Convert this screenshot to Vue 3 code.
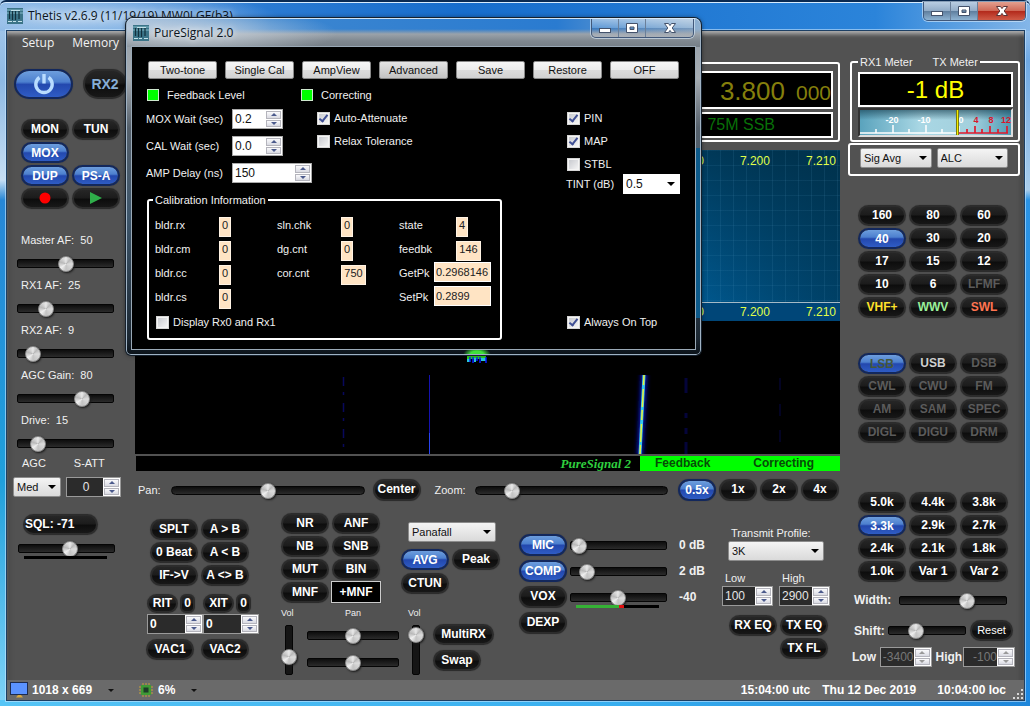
<script setup>
import { h, ref } from 'vue'

const Spin = (props) =>
  h('span', { class: 'spin' }, [
    h('input', { type: 'text', value: props.value, 'aria-label': props.label }),
    h('span', { class: 'spin-arrows' }, [
      h('button', { type: 'button', class: 'up', 'aria-label': props.label + ' up' }),
      h('button', { type: 'button', class: 'down', 'aria-label': props.label + ' down' }),
    ]),
  ])
Spin.props = ['label', 'value']

const Range = (props) =>
  h('input', { type: 'range', class: 'range', min: 0, max: 100, value: props.value, 'aria-label': props.label })
Range.props = ['label', 'value']

const Drop = (props) =>
  h('span', { class: 'drop' }, [
    h('select', { 'aria-label': props.label }, [h('option', props.value)]),
  ])
Drop.props = ['label', 'value']

const AppIcon = () =>
  h('svg', { class: 'app-icon', viewBox: '0 0 16 16', width: 16, height: 16, 'aria-hidden': 'true' }, [
    h('rect', { width: 16, height: 16, fill: '#3b7488' }),
    h('path', { d: 'M0 2h16M0 5h16', stroke: '#86bccb', 'stroke-width': 1 }),
    h('path', { d: 'M2.500 3v8M5.500 2v10M8.500 3v9M12 3v8', stroke: '#12303d', 'stroke-width': 1.200 }),
    h('path', { d: 'M4 2.500h9M1 13.500h4M6 13.500h3M11 13.500h4', stroke: '#c3e2ea', 'stroke-width': 1 }),
  ])

const levels = [
  { name: 'Master AF:', shown: 50, at: 50 },
  { name: 'RX1 AF:', shown: 25, at: 25 },
  { name: 'RX2 AF:', shown: 9, at: 9 },
  { name: 'AGC Gain:', shown: 80, at: 71 },
  { name: 'Drive:', shown: 15, at: 15 },
]
const bands = ['160', '80', '60', '40', '30', '20', '17', '15', '12', '10', '6', 'LFMF', 'VHF+', 'WWV', 'SWL']
const bandClass = { 40: 'on', LFMF: 'dim', 'VHF+': 'yellow', WWV: 'green', SWL: 'coral' }
const modes = ['LSB', 'USB', 'DSB', 'CWL', 'CWU', 'FM', 'AM', 'SAM', 'SPEC', 'DIGL', 'DIGU', 'DRM']
const modeClass = (m) => (m === 'LSB' ? 'on olive' : m === 'USB' ? 'silver' : 'dim')
const filters = ['5.0k', '4.4k', '3.8k', '3.3k', '2.9k', '2.7k', '2.4k', '2.1k', '1.8k', '1.0k', 'Var 1', 'Var 2']
const noise = ['NR', 'ANF', 'NB', 'SNB', 'MUT', 'BIN', 'MNF', '+MNF']
const zooms = ['0.5x', '1x', '2x', '4x']
const transmit = [
  { name: 'MIC', at: 0, shown: '0 dB', on: true },
  { name: 'COMP', at: 10, shown: '2 dB', on: true },
  { name: 'VOX', at: 49, shown: '-40', on: false },
]
const psButtons = ['Two-tone', 'Single Cal', 'AmpView', 'Advanced', 'Save', 'Restore', 'OFF']
const delays = [
  { name: 'MOX Wait (sec)', value: '0.2' },
  { name: 'CAL Wait (sec)', value: '0.0' },
  { name: 'AMP Delay (ns)', value: '150', wide: true },
]
const calibration = [
  [['bldr.rx', '0'], ['bldr.cm', '0'], ['bldr.cc', '0'], ['bldr.cs', '0']],
  [['sln.chk', '0'], ['dg.cnt', '0'], ['cor.cnt', '750']],
  [['state', '4'], ['feedbk', '146']],
]
const peaks = [['GetPk', '0.2968146'], ['SetPk', '0.2899']]
const auto = ref(true)
const relax = ref(false)
const pin = ref(true)
const map = ref(true)
const stbl = ref(false)
const onTop = ref(true)
const showRx = ref(false)
</script>

<template>
  <div class="window">
    <header class="title">
      <AppIcon />
      <h1>Thetis v2.6.9 (11/19/19) MW0LGE(b3)</h1>
      <div class="caption main-caption">
        <button type="button" aria-label="Minimize"><svg width="14" height="12" viewBox="0 0 14 12"><rect x="1.500" y="6.500" width="11" height="4" fill="#fff" stroke="#44526b" /></svg></button>
        <button type="button" aria-label="Maximize"><svg width="14" height="12" viewBox="0 0 14 12"><path d="M1.500 1.500h11v9h-11zM5 5v2.500h4V5z" fill="#fff" fill-rule="evenodd" stroke="#44526b" /></svg></button>
        <button type="button" class="close" aria-label="Close"><svg width="14" height="12" viewBox="0 0 14 12"><path d="M1.500 1.500h4L7 3.600 8.500 1.500h4L9.200 6l3.300 4.500h-4L7 8.400l-1.500 2.100h-4L4.800 6z" fill="#fff" stroke="#5a3436" /></svg></button>
      </div>
    </header>

    <main class="client">
      <div class="columns">
        <section class="left">
          <nav class="menu"><a href="#">Setup</a><a href="#">Memory</a></nav>
          <div class="power-row">
            <button type="button" class="pill on power" aria-label="Power">
              <svg width="24" height="24" viewBox="0 0 24 24" fill="none" stroke="#b9dcff" stroke-width="3.400"><path d="M7.500 5.500a8.200 8.200 0 1 0 9 0M12 2v9.500" /></svg>
            </button>
            <button type="button" class="pill rx2">RX2</button>
          </div>
          <div class="pads pads2">
            <button type="button" class="pill">MON</button>
            <button type="button" class="pill">TUN</button>
            <button type="button" class="pill on">MOX</button>
            <span></span>
            <button type="button" class="pill on">DUP</button>
            <button type="button" class="pill on">PS-A</button>
            <button type="button" class="pill" aria-label="Record"><svg width="12" height="12"><circle cx="6" cy="6" r="5.500" fill="#f00" /></svg></button>
            <button type="button" class="pill" aria-label="Play"><svg width="14" height="14"><path d="M1 1l12 6-12 6z" fill="#2fae4a" /></svg></button>
          </div>
          <div class="levels">
            <div v-for="l in levels" :key="l.name" class="level">
              <span>{{ l.name }}&nbsp; {{ l.shown }}</span>
              <Range :label="l.name" :value="l.at" />
            </div>
          </div>
          <div class="agc-head"><span>AGC</span><span>S-ATT</span></div>
          <div class="agc-row">
            <Drop label="AGC" value="Med" class="agc-drop" />
            <Spin label="S-ATT" value="0" class="dark satt" />
          </div>
          <button type="button" class="pill sql">SQL: -71</button>
          <Range label="Squelch" :value="54" class="sql-range" />
          <div class="sql-meter"></div>
        </section>

        <section class="center">
          <div class="vfo">
            <div class="freq"><span class="mhz">3.800</span><span class="hz">000</span></div>
            <div class="bandname">75M SSB</div>
          </div>
          <div class="pan">
            <div class="axis"><span>7.190</span><span>7.200</span><span>7.210</span></div>
            <div class="axis low"><span>7.190</span><span>7.200</span><span>7.210</span></div>
          </div>
          <svg class="fall" viewBox="0 0 705 133" preserveAspectRatio="none" aria-hidden="true">
            <defs><filter id="glow" x="-5" width="11"><feGaussianBlur stdDeviation="2 0.5" /></filter></defs>
            <rect width="705" height="133" fill="#000" />
            <rect x="332" y="24" width="19" height="14" fill="#2bdc1e" />
            <path d="M332 38h3v3h-3zM339 37h2v4h-2zM346 37h5v3h-5z" fill="#26c8d8" />
            <path d="M335 36v5M338 36v6M342 36v4M345 36v6M351 36v6" stroke="#0a1cff" stroke-width="1.500" />
            <rect x="294" y="54" width="1" height="79" fill="#1512b0" />
            <rect x="294" y="112" width="1" height="21" fill="#2a44f0" />
            <path d="M208.500 56v76" stroke="#08085c" stroke-dasharray="9 6 3 8" stroke-width="1.500" />
            <path d="M551 57v76" stroke="#04043a" stroke-dasharray="15 20 5 10 6 8" stroke-width="3" />
            <path d="M645 57v76" stroke="#030322" stroke-dasharray="12 14" stroke-width="2" />
            <path d="M509 54l-4 79" stroke="#0a12b0" stroke-width="6" filter="url(#glow)" />
            <path d="M509 54l-4 79" stroke="#35c8f0" stroke-width="3" />
            <path d="M509 54l-4 79" stroke="#e8f03c" stroke-width="1.500" stroke-dasharray="10 4 18 3" />
          </svg>
          <div class="info">
            <em>PureSignal 2</em>
            <div class="info-on"><span>Feedback</span><span>Correcting</span></div>
          </div>

          <div class="panrow">
            <span class="panlabel">Pan:</span>
            <Range label="Pan" :value="50" class="round" />
            <button type="button" class="pill center-btn">Center</button>
            <span class="zoomlabel">Zoom:</span>
            <Range label="Zoom" :value="16" class="round" />
            <div class="zooms">
              <button v-for="(z, i) in zooms" :key="z" type="button" class="pill" :class="{ on: i === 0 }">{{ z }}</button>
            </div>
          </div>

          <div class="groups">
            <div class="vfo-group">
              <div class="pads pads2 vfo-pads">
                <button type="button" class="pill">SPLT</button>
                <button type="button" class="pill">A &gt; B</button>
                <button type="button" class="pill">0 Beat</button>
                <button type="button" class="pill">A &lt; B</button>
                <button type="button" class="pill">IF-&gt;V</button>
                <button type="button" class="pill">A &lt;&gt; B</button>
              </div>
              <div class="rit">
                <div v-for="r in ['RIT', 'XIT']" :key="r" class="rit-col">
                  <button type="button" class="pill">{{ r }}</button>
                  <button type="button" class="pill zero">0</button>
                  <Spin :label="r" value="0" class="dark bold" />
                </div>
              </div>
              <div class="vac">
                <button type="button" class="pill">VAC1</button>
                <button type="button" class="pill">VAC2</button>
              </div>
            </div>

            <div class="dsp-group">
              <div class="dsp-top">
                <div class="pads pads2">
                  <button v-for="n in noise" :key="n" type="button" class="pill" :class="{ boxed: n === '+MNF' }">{{ n }}</button>
                </div>
                <div class="display">
                  <Drop label="Display" value="Panafall" class="display-drop" />
                  <div class="pads pads2">
                    <button type="button" class="pill on">AVG</button>
                    <button type="button" class="pill">Peak</button>
                    <button type="button" class="pill">CTUN</button>
                  </div>
                </div>
              </div>
              <div class="multi">
                <div class="vol"><span>Vol</span><Range label="Main volume" :value="28" class="upright" /></div>
                <div class="pans"><span>Pan</span><Range label="Main pan" :value="50" /><Range label="Sub pan" :value="50" /></div>
                <div class="vol"><span>Vol</span><Range label="Sub volume" :value="98" class="upright" /></div>
                <div class="multi-btns">
                  <button type="button" class="pill multirx">MultiRX</button>
                  <button type="button" class="pill">Swap</button>
                </div>
              </div>
            </div>

            <div class="tx-group">
              <div v-for="t in transmit" :key="t.name" class="tx-row">
                <button type="button" class="pill" :class="{ on: t.on }">{{ t.name }}</button>
                <div class="tx-slide">
                  <Range :label="t.name" :value="t.at" />
                  <i v-if="t.name === 'VOX'" class="vox-meter"></i>
                </div>
                <b>{{ t.shown }}</b>
              </div>
              <div class="tx-row"><button type="button" class="pill">DEXP</button></div>
            </div>

            <div class="profile">
              <span class="profile-label">Transmit Profile:</span>
              <Drop label="Transmit Profile" value="3K" class="profile-drop" />
              <div class="cut">
                <div><span>Low</span><Spin label="Low" value="100" class="dark" /></div>
                <div><span>High</span><Spin label="High" value="2900" class="dark" /></div>
              </div>
              <div class="pads pads2 eq">
                <button type="button" class="pill">RX EQ</button>
                <button type="button" class="pill">TX EQ</button>
                <span></span>
                <button type="button" class="pill">TX FL</button>
              </div>
            </div>
          </div>
        </section>

        <section class="right">
          <fieldset class="meter">
            <legend>RX1 Meter<span>TX Meter</span></legend>
            <div class="reading">-1 dB</div>
            <svg class="scale" viewBox="0 0 151 25" preserveAspectRatio="none" role="img" aria-label="Signal meter">
              <defs>
                <linearGradient id="m1"><stop offset="0" stop-color="#5aa3bd" /><stop offset=".4" stop-color="#a9d7e4" /><stop offset=".75" stop-color="#a3d0dd" /><stop offset="1" stop-color="#4f9ab4" /></linearGradient>
                <linearGradient id="m2" x2="0" y2="1"><stop offset="0" stop-color="#123a4c" stop-opacity=".6" /><stop offset=".4" stop-color="#123a4c" stop-opacity="0" /></linearGradient>
              </defs>
              <rect width="151" height="25" fill="url(#m1)" /><rect width="151" height="25" fill="url(#m2)" />
              <path d="M0 23h98M16 23v-4M33 23v-8M49 23v-4M66 23v-8M82 23v-4M99 23v-7" stroke="#fff" stroke-width="1.500" />
              <path d="M99 23h49M107 23v-4M115 23v-7M122 23v-4M130 23v-7M138 23v-4M147 23v-7" stroke="#e01a2c" stroke-width="1.700" />
              <g font-family="Liberation Sans, sans-serif" font-size="9" font-weight="bold" text-anchor="middle">
                <g fill="#fff"><text x="32" y="13">-20</text><text x="64" y="13">-10</text><text x="101" y="13">0</text></g>
                <g fill="#d8182c"><text x="116" y="13">4</text><text x="131" y="13">8</text><text x="146" y="13">12</text></g>
              </g>
              <path d="M97.500 0v25" stroke="#7b7a10" stroke-width="3" /><path d="M97.500 0v25" stroke="#f4f000" />
            </svg>
          </fieldset>
          <div class="meter-select">
            <Drop label="RX1 Meter" value="Sig Avg" />
            <Drop label="TX Meter" value="ALC" />
          </div>
          <div class="pads pads3 bands"><button v-for="b in bands" :key="b" type="button" class="pill" :class="bandClass[b]">{{ b }}</button></div>
          <div class="pads pads3 modes"><button v-for="m in modes" :key="m" type="button" class="pill" :class="modeClass(m)">{{ m }}</button></div>
          <div class="pads pads3 filters"><button v-for="f in filters" :key="f" type="button" class="pill" :class="{ on: f === '3.3k' }">{{ f }}</button></div>
          <div class="width-row"><b>Width:</b><Range label="Width" :value="66" /></div>
          <div class="shift-row"><b>Shift:</b><Range label="Shift" :value="32" /><button type="button" class="pill reset">Reset</button></div>
          <div class="edge-row">
            <b>Low</b><Spin label="Filter low" value="-3400" class="dark off" />
            <b>High</b><Spin label="Filter high" value="-100" class="dark off" />
          </div>
        </section>
      </div>

      <footer class="status">
        <svg width="18" height="16" viewBox="0 0 18 16"><rect x=".5" y=".5" width="17" height="12" fill="#5b93ff" stroke="#1e2c4e" /><path d="M8 13h3l2 2.500H6z" fill="#d7a840" /></svg>
        <span class="size">1018 x 669</span><i class="tri"></i>
        <svg class="chip" width="14" height="14" viewBox="0 0 14 14"><path d="M4 0v14M7 0v14M10 0v14M0 4h14M0 7h14M0 10h14" stroke="#c7a13a" /><rect x="2" y="2" width="10" height="10" fill="#3f9a35" /><rect x="4.500" y="4.500" width="5" height="5" fill="#1f3b28" /></svg>
        <span class="cpu">6%</span><i class="tri"></i>
        <span class="utc">15:04:00 utc</span><span class="date">Thu 12 Dec 2019</span><span>10:04:00 loc</span>
        <svg class="grip" width="12" height="12" fill="#d8d8d8"><path d="M9 1h2v2H9zM9 5h2v2H9zM9 9h2v2H9zM5 5h2v2H5zM5 9h2v2H5zM1 9h2v2H1z" /></svg>
      </footer>
    </main>

    <section class="dialog" role="dialog" aria-label="PureSignal 2.0">
      <header class="dialog-title">
        <AppIcon />
        <h2>PureSignal 2.0</h2>
        <div class="caption">
          <button type="button" aria-label="Minimize dialog"><svg width="14" height="12" viewBox="0 0 14 12"><rect x="1.500" y="6.500" width="11" height="4" fill="#fff" stroke="#44526b" /></svg></button>
          <button type="button" aria-label="Maximize dialog"><svg width="14" height="12" viewBox="0 0 14 12"><path d="M1.500 1.500h11v9h-11zM5 5v2.500h4V5z" fill="#fff" fill-rule="evenodd" stroke="#44526b" /></svg></button>
          <button type="button" class="close" aria-label="Close dialog"><svg width="14" height="12" viewBox="0 0 14 12"><path d="M1.500 1.500h4L7 3.600 8.500 1.500h4L9.200 6l3.300 4.500h-4L7 8.400l-1.500 2.100h-4L4.800 6z" fill="#fff" stroke="#44526b" /></svg></button>
        </div>
      </header>
      <div class="dialog-body">
        <div class="ps-buttons">
          <button v-for="p in psButtons" :key="p" type="button" :class="{ pressed: p === 'Advanced' }">{{ p }}</button>
        </div>
        <div class="ps-main">
          <div class="ps-left">
            <div class="ps-lights"><span><i></i>Feedback Level</span><span><i></i>Correcting</span></div>
            <div class="ps-settings">
              <div class="delays">
                <div v-for="d in delays" :key="d.name" class="delay">
                  <span>{{ d.name }}</span><Spin :label="d.name" :value="d.value" :class="{ wide: d.wide }" />
                </div>
              </div>
              <div class="checks">
                <label class="check"><input v-model="auto" type="checkbox" />Auto-Attenuate</label>
                <label class="check"><input v-model="relax" type="checkbox" />Relax Tolerance</label>
              </div>
            </div>
            <fieldset class="calib">
              <legend>Calibration Information</legend>
              <div class="calib-grid">
                <div v-for="(col, i) in calibration" :key="i" class="calib-col" :class="'c' + i">
                  <div v-for="[name, value] in col" :key="name" class="calib-row"><span>{{ name }}</span><output :class="{ num3: value.length > 1 }">{{ value }}</output></div>
                  <template v-if="i === 2">
                    <label v-for="[name, value] in peaks" :key="name" class="calib-row peak"><span>{{ name }}</span><input type="text" :value="value" /></label>
                  </template>
                </div>
              </div>
              <label class="check"><input v-model="showRx" type="checkbox" />Display Rx0 and Rx1</label>
            </fieldset>
          </div>
          <div class="ps-right">
            <div class="checks">
              <label class="check"><input v-model="pin" type="checkbox" />PIN</label>
              <label class="check"><input v-model="map" type="checkbox" />MAP</label>
              <label class="check"><input v-model="stbl" type="checkbox" />STBL</label>
            </div>
            <div class="tint"><span>TINT (dB)</span><Drop label="TINT (dB)" value="0.5" class="flat" /></div>
            <label class="check top"><input v-model="onTop" type="checkbox" />Always On Top</label>
          </div>
        </div>
      </div>
    </section>
  </div>
</template>

<style>
body { margin: 0; background: #0b2c55; }
.spin { display: inline-flex; height: 20px; border: 1px solid #aaa; background: #fff; }
.spin input { flex: 1; min-width: 0; width: 10px; border: 0; padding: 0 0 1px 2px; background: transparent; color: #111; font: 12px "Liberation Sans", Arial, sans-serif; outline: none; }
.spin-arrows { width: 15px; display: flex; flex-direction: column; gap: 1px; padding: 1px; background: #fff; }
.spin-arrows button { flex: 1; min-height: 0; padding: 0; border: 1px solid #b4b4bc; background: linear-gradient(#fafafc, #d9dae2); display: flex; align-items: center; justify-content: center; }
.spin-arrows button::after { content: ""; border: 3px solid transparent; }
.spin-arrows .up::after { border-top: 0; border-bottom-color: #4b5a8c; }
.spin-arrows .down::after { border-bottom: 0; border-top-color: #4b5a8c; }
.spin.dark { background: #2b2b2b; border-color: #9a9a9a; }
.spin.dark input { color: #e4e4e4; }
.spin.bold input { color: #fff; font-weight: bold; }
.spin.satt input { text-align: center; }
.spin.off input { color: #777; text-align: right; }
.spin.off .up::after { border-bottom-color: #999; }
.spin.off .down::after { border-top-color: #999; }

.range { appearance: none; display: block; height: 16px; width: 100%; min-width: 0; margin: 0; background: transparent; }
.range::-webkit-slider-runnable-track { height: 9px; border: 1px solid #050505; border-radius: 2px; background: linear-gradient(#0d0d0d, #2b2b2b); }
.range::-webkit-slider-thumb { appearance: none; width: 16px; height: 16px; margin-top: -4px; border: 1px solid #8a8a8a; border-radius: 50%; background: conic-gradient(#e9e9e9, #b8b8b8 12%, #dcdcdc 25%, #c2c2c2 50%, #efefef 65%, #b9b9b9 80%, #e9e9e9); box-shadow: 1px 1px 2px #1c1c1c; }
.range.round::-webkit-slider-runnable-track { border-radius: 5px; }
.range.upright { writing-mode: vertical-lr; direction: rtl; width: 16px; height: 50px; }
.range.upright::-webkit-slider-runnable-track { width: 8px; height: 100%; background: #151515; }
.range.upright::-webkit-slider-thumb { margin: 0 0 0 -5px; }

.drop { position: relative; display: inline-flex; height: 20px; }
.drop select { appearance: none; width: 100%; min-width: 0; height: 100%; margin: 0; padding: 0 14px 0 3px; border: 1px solid #8c8c8c; border-radius: 2px; background: linear-gradient(#f4f4f4, #dadada); color: #111; font: 11px "Liberation Sans", Arial, sans-serif; }
.drop::after { content: ""; position: absolute; right: 5px; top: 8px; border: 4px solid transparent; border-top-color: #000; border-bottom: 0; pointer-events: none; }
.drop.flat select { background: #fff; border-color: #fff; border-radius: 0; padding-left: 2px; font-size: 12px; }
.app-icon { flex: none; display: block; }
</style>

<style scoped>
* { box-sizing: border-box; }
.window { position: relative; min-height: 100vh; display: flex; flex-direction: column; padding: 0 6px 6px 7px; font: 11px/16px "Liberation Sans", Arial, sans-serif; color: #f0f0f0;
  background:
    linear-gradient(90deg, #56c5f6, #37aeef 60%, #1e86da) bottom / 100% 6px no-repeat,
    linear-gradient(#b5d4f2 0, #6fa9e4 60px, #a9cdec 190px, #2a93e6 200px, #1d88e2) right / 6px 100% no-repeat,
    linear-gradient(#a8cbec 0, #8db9e4 80px, #c6def3 180px, #2787d6 200px, #1f9fdb 480px, #7fd3f8) left / 7px 100% no-repeat,
    #1c74d0; }
button { font: bold 12px/14px "Liberation Sans", Arial, sans-serif; margin: 0; }
h1, h2 { margin: 0; font: 12px/18px "Open Sans", "Noto Sans", sans-serif; color: #0b1420; white-space: nowrap; text-shadow: 0 0 6px #fff; }
i { display: block; }
.title { height: 31px; flex: none; margin: 0 -6px 0 -7px; padding: 0 4px 0 7px; display: flex; align-items: flex-start; gap: 5px; border-top: 2px solid #0a2a52; box-shadow: inset 0 1px #d7ecff; border-radius: 6px 6px 0 0;
  background: radial-gradient(ellipse 190px 26px at 90px 16px, rgba(190,215,240,.85), transparent), linear-gradient(90deg, #80b2e4, #2a7ad2 26%, #176dcc 45%, #2b84da 85%, #84b6e8); }
.title .app-icon { margin-top: 6px; }
.title h1 { margin-top: 5px; flex: 1; }
.caption { display: flex; height: 19px; flex: none; border: 1px solid #41587a; border-top: 0; border-radius: 0 0 5px 5px; box-shadow: 0 0 0 1px rgba(220,236,252,.6); overflow: hidden; }
.caption button { width: 27px; padding: 0; border: 0; border-right: 1px solid #6a7f99; display: flex; align-items: center; justify-content: center; background: linear-gradient(rgba(255,255,255,.45), rgba(255,255,255,.15) 48%, rgba(20,40,80,.15) 52%, rgba(255,255,255,.25)); }
.caption .close { width: 47px; border-right: 0; }
.main-caption button { background: linear-gradient(#b9cde2, #93adc8 48%, #5f7f9f 52%, #8fb3d2); }
.main-caption .close { background: linear-gradient(#e3a08f, #cf6a58 48%, #b32a1c 52%, #cf5b47); }
.client { flex: 1; display: flex; flex-direction: column; background: #525252; box-shadow: 0 0 0 1px #1d3f63, 0 0 0 2px rgba(200,230,255,.6), inset 0 5px 4px -2px #b0b0b0, inset -5px 0 5px -3px #3c3c3c, inset 5px 0 5px -3px #444; }
.columns { flex: 1; display: grid; grid-template-columns: 128px 1fr 184px; }

.pill { height: 21px; padding: 0 0 2px; border: 2px solid #2c2c2c; border-radius: 11px; background: linear-gradient(#262626, #1c1c1c 45%, #0d0d0d 55%, #181818); color: #fff; display: flex; align-items: center; justify-content: center; white-space: nowrap; box-shadow: 0 0 1px #333; }
.pill.on { padding: 0; border-color: #13285c; background: linear-gradient(#6d9edd, #4d80cf 42%, #2348ae 52%, #2f5cc4) padding-box; }
.pill.dim { color: #5b5b5b; }
.pill.silver { color: #cfcfcf; }
.pill.olive { color: #46583a; }
.pill.yellow { color: #ffe12a; }
.pill.green { color: #9af09a; }
.pill.coral { color: #ff7450; }
.pads { display: grid; gap: 2px 3px; justify-content: start; }
.pads2 { grid-template-columns: repeat(2, 48px); }
.pads3 { grid-template-columns: repeat(3, 48px); }

.left { display: flex; flex-direction: column; }
.menu { height: 24px; display: flex; align-items: center; gap: 18px; padding-left: 15px; }
.menu a { color: #f2f2f2; text-decoration: none; font: 12px/16px "Open Sans", "Noto Sans", sans-serif; }
.power-row { margin: 14px 0 20px 7px; display: flex; gap: 10px; }
.power { width: 59px; height: 30px; border-radius: 15px; }
.rx2 { width: 44px; height: 30px; border-radius: 15px; color: #86aed6; font-size: 14px; padding: 0; }
.left .pads { margin-left: 14px; }
.levels { margin-top: 23px; display: flex; flex-direction: column; gap: 6px; padding: 0 21px 0 10px; }
.level { display: flex; flex-direction: column; gap: 7px; }
.level span { padding-left: 4px; }
.agc-head { margin-top: 4px; display: flex; gap: 28px; padding-left: 15px; }
.agc-row { margin-top: 6px; display: flex; gap: 5px; padding-left: 6px; }
.agc-drop { width: 48px; }
.satt { width: 55px; }
.sql { width: 75px; margin: 17px 0 5px 16px; justify-content: flex-start; }
.sql-range { width: 97px; margin-left: 11px; }
.sql-meter { height: 3px; width: 83px; margin-left: 17px; background: #000; }

.center { min-width: 0; }
.vfo { margin: 31px 0 8px auto; width: 360px; height: 80px; border: 2px solid #fff; border-radius: 3px; padding: 7px 5px 4px 10px; display: flex; flex-direction: column; gap: 3px; }
.freq { height: 38px; border: 2px solid #fff; background: #000; color: #857f0c; display: flex; align-items: baseline; justify-content: flex-end; gap: 11px; font-size: 26px; line-height: 36px; }
.hz { font-size: 21px; }
.bandname { height: 26px; border: 2px solid #fff; background: #000; color: #087008; font-size: 16px; line-height: 22px; padding-right: 56px; text-align: right; }
.pan { height: 171px; display: flex; flex-direction: column; justify-content: space-between;
  background: repeating-linear-gradient(90deg, rgba(90,160,200,.12) 0 1px, transparent 1px 13px), repeating-linear-gradient(rgba(90,160,200,.1) 0 1px, transparent 1px 15px), linear-gradient(200deg, #00334f 5%, transparent 50%), linear-gradient(90deg, #005a92 80%, #004670); }
.axis { display: flex; justify-content: flex-end; gap: 36px; padding: 2px 4px 0 0; font-size: 12px; line-height: 18px; color: #e0ff4a; }
.axis.low { padding-top: 0; border-top: 1px solid #a6bac6; background: #004678; }
.fall { display: block; width: 100%; height: 133px; }
.info { margin: 2px 0 0 1px; height: 15px; display: flex; justify-content: flex-end; background: #000; font-size: 12px; line-height: 15px; font-weight: bold; }
.info em { color: #2fcf3f; font-family: "Liberation Serif", serif; font-size: 13px; padding-right: 9px; }
.info-on { width: 200px; background: #0f0; color: #074c07; display: flex; gap: 43px; padding-left: 15px; }
.panrow { height: 22px; margin-top: 8px; display: flex; align-items: center; }
.panlabel { width: 36px; padding-left: 3px; }
.panrow .range { flex: 1; width: auto; }
.panrow .pill { height: 22px; }
.center-btn { width: 48px; margin: 0 14px 0 8px; }
.zoomlabel { width: 40px; }
.zooms { display: flex; gap: 3px; margin: 0 1px 0 10px; }
.zooms .pill { width: 38px; }
.groups { margin-top: 12px; padding: 0 9px 0 11px; display: grid; grid-template-columns: 135px 238px 1fr 109px; }
.vfo-group { padding-top: 6px; }
.vfo-pads { padding-left: 4px; }
.rit { margin-top: 8px; display: flex; padding-left: 1px; }
.rit-col { width: 56px; display: grid; grid-template-columns: 31px 15px; gap: 1px 2px; }
.rit .pill { height: 19px; }
.rit .zero { border-radius: 6px; }
.rit .spin { width: 56px; }
.vac { margin-top: 5px; display: flex; gap: 7px; }
.vac .pill { width: 48px; }
.dsp-top { display: flex; gap: 21px; }
.pill.boxed { border: 1px solid #ccc; border-radius: 0; background: #000; padding: 0; height: 22px; margin: -1px -1px 0; }
.display { display: flex; flex-direction: column; padding-top: 9px; }
.display-drop { width: 88px; margin: 0 0 7px 7px; }
.display .pads { gap: 3px; }
.multi { display: flex; margin-top: 2px; font-size: 9px; line-height: 16px; }
.vol { width: 16px; display: flex; flex-direction: column; gap: 4px; }
.vol span { white-space: nowrap; }
.pans { width: 92px; margin: 0 9px 0 10px; display: flex; flex-direction: column; gap: 11px; }
.pans span { text-align: center; }
.pans span + .range { margin-top: -5px; }
.multi-btns { padding: 19px 0 0 9px; display: flex; flex-direction: column; gap: 5px; }
.multi-btns .pill { width: 48px; }
.multi-btns .multirx { width: 61px; }
.tx-group { padding-top: 21px; display: flex; flex-direction: column; gap: 4px; }
.tx-row { display: flex; align-items: center; gap: 3px; }
.tx-row .pill { width: 48px; height: 22px; flex: none; }
.tx-slide { width: 97px; position: relative; }
.tx-row b { padding-left: 9px; font-size: 12px; }
.vox-meter { position: absolute; left: 6px; right: 8px; top: 16px; height: 3px; background: linear-gradient(90deg, #35b135 52%, #e01010 52% 58%, #000 58%); }
.profile { padding-top: 12px; }
.profile-label { display: block; padding-left: 9px; font-size: 11px; }
.profile-drop { width: 96px; margin-left: 6px; }
.cut { margin-top: 9px; display: flex; gap: 6px; }
.cut > div { display: flex; flex-direction: column; width: 51px; }
.cut > div span:first-child { padding-left: 3px; }
.eq { margin: 9px 0 0 7px; }

.right { display: flex; flex-direction: column; }
fieldset { min-width: 0; margin: 0; border: 2px solid #fff; border-radius: 3px; }
legend { padding: 0 2px; font-size: 11px; line-height: 12px; }
.meter { margin: 25px 4px 0 10px; height: 86px; padding: 4px 5px 0 6px; }
.meter legend span { padding-left: 20px; }
.reading { height: 35px; border: 2px solid #fff; background: #000; color: #ff0; font-size: 24px; line-height: 31px; text-align: center; }
.scale { display: block; width: 100%; height: 29px; margin-top: 1px; border: 2px solid #ddd; border-top-color: #333; border-left-color: #333; }
.meter-select { margin: 1px 4px 0 8px; height: 33px; border: 2px solid #fff; border-radius: 3px; display: flex; gap: 5px; padding: 3px 10px; }
.meter-select .drop { flex: 1; }
.bands { margin: 29px 0 0 18px; }
.modes { margin: 35px 0 0 18px; }
.filters { margin: 49px 0 0 18px; }
.right b { font-size: 12px; }
.width-row { margin-top: 10px; display: flex; align-items: center; padding: 0 17px 0 14px; }
.width-row b { width: 45px; flex: none; }
.shift-row { margin-top: 12px; display: flex; align-items: center; padding: 0 11px 0 14px; }
.shift-row b { width: 34px; flex: none; }
.reset { width: 43px; flex: none; margin-left: 4px; font-size: 11px; font-weight: normal; }
.edge-row { margin-top: 6px; display: flex; align-items: center; padding: 0 9px 0 12px; }
.edge-row .spin { width: 52px; margin-right: 4px; }
.edge-row b { flex: 1; }
.edge-row .spin:last-child { margin-right: 0; }

.status { height: 20px; flex: none; display: flex; align-items: center; background: #6a6a6a; color: #fff; font-size: 12px; font-weight: bold; padding-left: 3px; }
.size { margin-left: 4px; }
.tri { border: 3px solid transparent; border-top-color: #111; border-bottom: 0; margin-left: 16px; }
.chip { margin-left: 25px; }
.cpu { margin-left: 5px; }
.utc { margin-left: auto; }
.date { margin: 0 21px 0 12px; }
.grip { margin-left: 6px; align-self: flex-end; }

.dialog { position: absolute; left: 126px; top: 18px; width: 575px; padding: 0 6px 6px; border-radius: 7px 7px 5px 5px; box-shadow: inset 0 0 0 1px #9fb2c4, 0 0 0 1px #15202c, 0 0 5px rgba(0,0,0,.6);
  background: radial-gradient(ellipse 14px 8px at 351px 100%, #3fe03a 50%, transparent), linear-gradient(#0d5a8a, #0d5a8a) right 0 top 130px / 6px 170px no-repeat, linear-gradient(#8f9aa4, #a7adb3 60px, #55606b 110px, #3e566b 200px, #1c2833 320px, #0b1219); }
.dialog-title { height: 29px; margin: 0 -5px; padding: 0 6px; display: flex; align-items: flex-start; gap: 5px; border-top: 1px solid #cfe3f5; border-radius: 6px 6px 0 0;
  background: radial-gradient(ellipse 150px 26px at 60px 14px, rgba(205,215,225,.9), transparent), linear-gradient(transparent 10px, #9aa2aa 15px, #7f8890 22px, #757e87), linear-gradient(90deg, #9fbbd8, #3c86d0 25%, #2a7bd0 75%, #8fb0d0); }
.dialog-title .app-icon { margin-top: 6px; }
.dialog-title h2 { flex: 1; margin-top: 5px; }
.dialog-body { background: #000; padding: 14px 15px 9px; box-shadow: 0 0 0 1px #9aa9b6; }
.ps-buttons { display: grid; grid-template-columns: repeat(7, 1fr); gap: 8px; padding: 0 1px; }
.ps-buttons button { height: 18px; padding: 0; border: 1px solid #888; border-radius: 2px; background: linear-gradient(#f6f6f6, #ececec 50%, #dcdcdc 52%, #d2d2d2); color: #111; font: 11px/14px "Liberation Sans", Arial, sans-serif; }
.ps-buttons .pressed { background: linear-gradient(#e4e4e4, #c2c2c2); }
.ps-main { display: grid; grid-template-columns: 355px 1fr; }
.ps-lights { margin-top: 8px; display: grid; grid-template-columns: 154px 1fr; }
.ps-lights span { display: flex; align-items: center; gap: 8px; }
.ps-lights i { width: 12px; height: 12px; background: #0f0; border: 1px solid #cfe8cf; }
.ps-settings { margin-top: 6px; display: grid; grid-template-columns: 170px 1fr; }
.delays { display: flex; flex-direction: column; gap: 7px; }
.delay { display: flex; align-items: center; height: 20px; }
.delay > span:first-child { width: 86px; margin-left: -1px; }
.delay .spin { width: 51px; }
.delay .wide { width: 80px; }
.checks { display: flex; flex-direction: column; gap: 7px; padding-top: 1px; }
.check { display: flex; align-items: center; gap: 4px; height: 16px; white-space: nowrap; }
.check input { appearance: none; position: relative; width: 13px; height: 13px; flex: none; margin: 0; border: 1px solid #d6d6d6; background: linear-gradient(135deg, #c4c6cc, #f8f8f8); box-shadow: inset 0 0 0 1px #f4f4f4; }
.check input:checked::after { content: ""; position: absolute; left: 3px; top: 0; width: 3px; height: 7px; border: solid #3f4f94; border-width: 0 2px 2px 0; transform: rotate(38deg); }
.calib { margin-top: 11px; height: 146px; padding: 11px 0 0 6px; }
.calib legend { margin-left: -2px; }
.calib-grid { display: grid; grid-template-columns: 122px 122px 1fr; height: 92px; }
.calib-col { display: flex; flex-direction: column; gap: 4px; }
.calib-row { display: flex; height: 20px; }
.calib-row span { width: 64px; }
.c2 .calib-row span { width: 57px; }
.c2 .peak span { width: 35px; flex: none; }
.calib-row output { width: 12px; height: 20px; background: #ffe4c4; border: 1px solid #fff3e4; color: #222; text-align: center; line-height: 15px; }
.calib-row .num3 { width: 25px; }
.peak input { width: 57px; height: 20px; margin-top: -3px; padding: 0 1px; border: 1px solid #fff; background: #ffe4c4; color: #222; font: 11px "Liberation Sans", Arial, sans-serif; }
.calib .check { margin: 5px 0 0 1px; }
.ps-right { display: flex; flex-direction: column; padding: 31px 0 10px 65px; white-space: nowrap; }
.ps-right .checks { padding-top: 0; }
.tint { margin-top: 2px; display: flex; align-items: center; }
.tint > span:first-child { width: 57px; margin-left: -1px; }
.tint .drop { width: 57px; }
.ps-right .top { margin-top: auto; }
</style>
